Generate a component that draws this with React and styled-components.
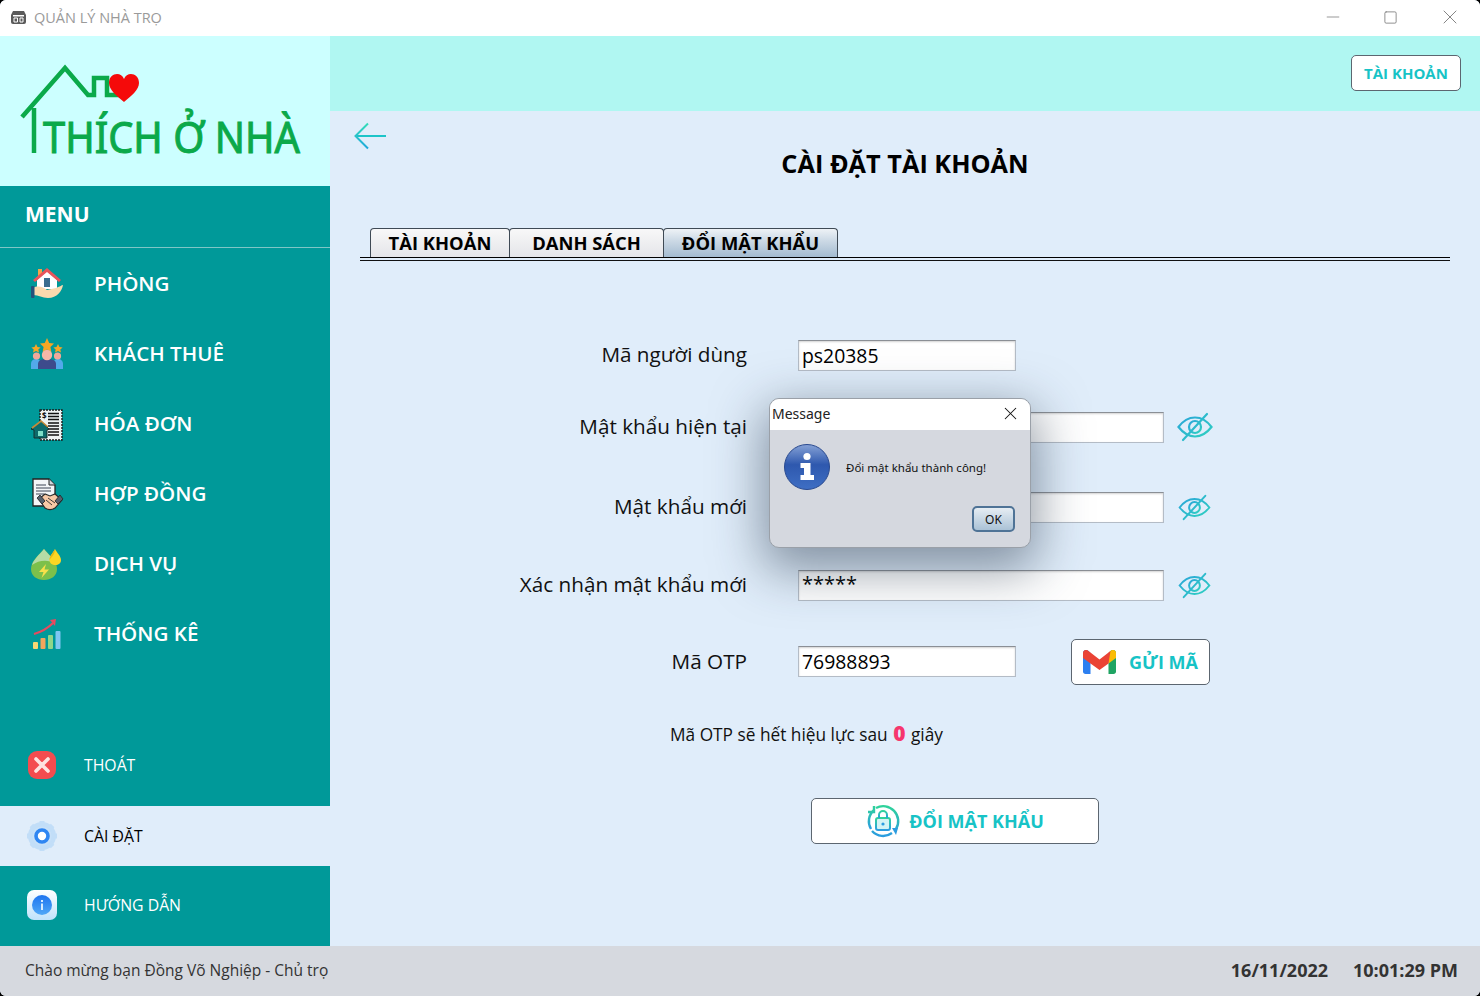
import React from "react";
import styled, { createGlobalStyle } from "styled-components";
import { Minus, Square, X } from "lucide-react";

const GlobalStyle = createGlobalStyle`
  html, body {
    margin: 0;
    padding: 0;
    background: #000;
  }
  * {
    box-sizing: border-box;
  }
`;

const Window = styled.div`
  width: 1480px;
  height: 996px;
  position: relative;
  display: flex;
  flex-direction: column;
  overflow: hidden;
  border-radius: 6px;
  background: #e0edfa;
  font-family: "Open Sans", "Noto Sans", sans-serif;
`;

const TitleBar = styled.div`
  height: 36px;
  flex: none;
  display: flex;
  align-items: center;
  padding: 0 0 2px 11px;
  background: #fff;
  color: #9a9a9a;
  font-size: 14.5px;
  gap: 8px;
`;

const TitleText = styled.span`
  flex: 1;
`;

const WinButtons = styled.div`
  display: flex;
  align-items: center;
  padding-right: 18px;
  gap: 40px;
  color: #777;
`;

const Body = styled.div`
  flex: 1;
  display: flex;
  min-height: 0;
`;

const Sidebar = styled.aside`
  width: 330px;
  flex: none;
  display: flex;
  flex-direction: column;
  background: #009999;
`;

const LogoBox = styled.div`
  height: 150px;
  flex: none;
  background: #ccffff;
  display: flex;
`;

const MenuHead = styled.div`
  height: 62px;
  flex: none;
  display: flex;
  align-items: center;
  padding: 0 0 6px 25px;
  color: #fff;
  font-size: 21px;
  font-weight: 700;
  border-bottom: 1px solid #7fc6c6;
`;

const NavList = styled.nav`
  margin-top: 1px;
  display: flex;
  flex-direction: column;
  flex: 1;
`;

const NavItem = styled.div`
  height: 70px;
  display: flex;
  align-items: center;
  padding-left: 30px;
  color: #fff;
  font-size: 20.6px;
  font-weight: 600;

  svg {
    width: 34px;
    height: 34px;
    flex: none;
    margin-right: 30px;
  }

  span {
    padding-bottom: 2px;
  }
`;

const BottomItem = styled.div`
  height: 60px;
  flex: none;
  display: flex;
  align-items: center;
  padding-left: 26px;
  font-size: 15.8px;
  margin-bottom: ${(p) => p.$after || 0}px;
  margin-top: ${(p) => p.$before || 0}px;
  color: ${(p) => (p.$active ? "#000" : "#fff")};
  background: ${(p) => (p.$active ? "#e0edfa" : "transparent")};

  svg {
    width: 32px;
    height: 32px;
    flex: none;
    margin-right: 26px;
  }
`;

const Main = styled.main`
  flex: 1;
  display: flex;
  flex-direction: column;
  min-width: 0;
`;

const TopBar = styled.div`
  height: 75px;
  flex: none;
  background: #b0f7f2;
  display: flex;
  align-items: center;
  justify-content: flex-end;
  padding: 0 19px 2px 0;
`;

const WhiteButton = styled.button`
  display: flex;
  align-items: center;
  justify-content: center;
  gap: ${(p) => p.$gap || 0}px;
  width: ${(p) => p.$w}px;
  height: ${(p) => p.$h}px;
  margin-top: ${(p) => p.$top || 0}px;
  padding: 0;
  background: #fff;
  border: 1px solid #5c6670;
  border-radius: 5px;
  color: #17c3c6;
  font-family: "Open Sans", "Noto Sans", sans-serif;
  font-weight: 700;
  font-size: ${(p) => p.$size || 18}px;
`;

const Content = styled.div`
  flex: 1;
  display: flex;
  flex-direction: column;
  padding: 11px 30px 0;
`;

const BackRow = styled.div`
  height: 18px;
  margin-left: -7px;

  svg {
    display: block;
  }
`;

const Heading = styled.h1`
  margin: 0;
  height: 42px;
  padding: 3px 0 0;
  text-align: center;
  color: #000;
  font-size: 25.3px;
  line-height: 40px;
  font-weight: 700;
`;

const TabStrip = styled.div`
  margin-top: 46px;
  display: flex;
  padding-left: 10px;
  border-bottom: 1px solid #000;
  position: relative;
  height: 30px;

  &::after {
    content: "";
    position: absolute;
    left: 0;
    right: 0;
    bottom: -4px;
    height: 1px;
    background: #111;
  }
`;

const Tab = styled.div`
  width: ${(p) => p.$w}px;
  height: 29px;
  display: flex;
  align-items: center;
  justify-content: center;
  border: 1px solid #3f4a55;
  border-bottom: none;
  border-radius: 4px 4px 0 0;
  margin-right: -1px;
  padding-bottom: 2px;
  color: #000;
  font-size: 18.4px;
  font-weight: 700;
  background: ${(p) =>
    p.$active
      ? "linear-gradient(#eef2f6, #cddae6 40%, #a3bbd0)"
      : "linear-gradient(#f8f8f8, #e4e5e9)"};
`;

const Form = styled.div`
  display: flex;
  flex-direction: column;
  margin-top: 74px;
  margin-left: -30px;
`;

const Row = styled.div`
  display: grid;
  grid-template-columns: 417px auto auto;
  column-gap: 51px;
  align-items: center;
  justify-content: start;
  height: 46px;
  margin-top: ${(p) => p.$gap || 0}px;
  position: relative;
`;

const Label = styled.label`
  padding-bottom: 2px;
  text-align: right;
  color: #111;
  font-size: 20.7px;
`;

const Field = styled.div`
  display: flex;
  align-items: center;
  gap: ${(p) => p.$gap || 0}px;
`;

const Input = styled.div`
  width: ${(p) => p.$w}px;
  height: 31px;
  padding: ${(p) => (p.$mask ? "0 3px 4px" : "0 3px")};
  display: flex;
  align-items: center;
  color: #000;
  font-size: ${(p) => (p.$mask ? 20 : 19.4)}px;
  background: #fff;
  border: 1px solid #b4bcc6;
  border-top-color: #8b8f95;
  box-shadow: inset 0 1px 2px rgba(0, 0, 0, 0.18);
`;

const Note = styled.div`
  margin-top: 36px;
  margin-left: 340px;
  color: #111;
  font-size: 17.3px;
  height: 26px;
  line-height: 26px;
`;

const Count = styled.b`
  color: #f6366d;
  font-size: 21px;
  font-weight: 800;
  margin: 0 1px;
`;

const ActionRow = styled.div`
  margin-top: 52px;
  margin-left: 481px;
`;

const StatusBar = styled.footer`
  height: 50px;
  flex: none;
  display: flex;
  align-items: center;
  justify-content: space-between;
  padding: 0 22px 2px 25px;
  background: #d6d9df;
  color: #333;
  font-size: 15.5px;
`;

const Clock = styled.div`
  display: flex;
  gap: 25px;
  color: #333;
  font-size: 18px;
  font-weight: 700;
`;

const Dialog = styled.div`
  position: absolute;
  left: 769px;
  top: 398px;
  width: 262px;
  height: 150px;
  border-radius: 10px;
  background: #d5d8df;
  border: 1px solid #9aa0a8;
  box-shadow: 0 16px 50px 6px rgba(40, 55, 75, 0.5);
  overflow: hidden;
  font-family: "Noto Sans", "Open Sans", sans-serif;
`;

const DialogTitle = styled.div`
  height: 31px;
  background: #fff;
  display: flex;
  align-items: center;
  justify-content: space-between;
  padding: 0 9px 3px 2px;
  color: #222;
  font-size: 14px;
`;

const DialogBody = styled.div`
  display: flex;
  align-items: center;
  padding: 14px 0 0 14px;
  gap: 16px;
  color: #111;
  font-size: 11.5px;
`;

const DialogFoot = styled.div`
  display: flex;
  justify-content: flex-end;
  padding: 16px 15px 0 0;
`;

const OkButton = styled.div`
  width: 43px;
  height: 26px;
  display: flex;
  align-items: center;
  justify-content: center;
  border: 2px solid #4f7396;
  border-radius: 5px;
  color: #111;
  font-size: 12px;
  background: linear-gradient(#e6edf3, #aac2d6);
`;

const BackArrow = () => (
  <svg width="34" height="30" viewBox="0 0 34 30" fill="none">
    <defs>
      <linearGradient id="backGrad" x1="0" y1="0" x2="0" y2="1">
        <stop offset="0" stopColor="#35dcb8" />
        <stop offset="1" stopColor="#1ea8dc" />
      </linearGradient>
    </defs>
    <path d="M33 14 H2.5" stroke="#1cc4c8" strokeWidth="2" />
    <path d="M15 1.5 L2.5 14 L15 26.5" stroke="url(#backGrad)" strokeWidth="2" />
  </svg>
);

const RoomIcon = () => (
  <svg viewBox="0 0 34 34">
    <rect x="8" y="2" width="4" height="7" fill="#f2a54a" />
    <path d="M7 13 L17 4 L27 13 V22 H7Z" fill="#fff" />
    <path d="M3 13 L17 1 L31 13 L29 15 L17 5 L5 15Z" fill="#e9545a" />
    <rect x="14" y="11" width="6" height="9" fill="#3b6d8f" />
    <path d="M3 21 C8 18 13 20 17 23 L26 21 C29 20 32 18 33 18 C32 24 27 31 18 31 C12 31 9 28 3 28Z" fill="#fbd9ae" />
    <rect x="1" y="19" width="3.5" height="12" rx="1" fill="#27507a" />
  </svg>
);

const GuestIcon = () => (
  <svg viewBox="0 0 34 34">
    <path d="M17 1 L19.2 6 L24 6.6 L20.4 10 L21.4 15 L17 12.5 L12.6 15 L13.6 10 L10 6.6 L14.8 6Z" fill="#f6a623" />
    <path d="M6 7 L7.5 10 L10.6 10.4 L8.3 12.6 L9 15.6 L6 14 L3 15.6 L3.7 12.6 L1.4 10.4 L4.5 10Z" fill="#f6a623" />
    <path d="M28 7 L29.5 10 L32.6 10.4 L30.3 12.6 L31 15.6 L28 14 L25 15.6 L25.7 12.6 L23.4 10.4 L26.5 10Z" fill="#f6a623" />
    <path d="M1 32 V27 C1 23 4 22 6 22 C9 22 11 24 11 27 V32Z" fill="#52a9ea" />
    <path d="M23 32 V27 C23 24 25 22 28 22 C31 22 33 24 33 27 V32Z" fill="#52a9ea" />
    <circle cx="6.5" cy="19" r="3.6" fill="#f1a899" />
    <circle cx="27.5" cy="19" r="3.6" fill="#f1a899" />
    <path d="M8 32 V27 C8 23 12 22 17 22 C22 22 26 23 26 27 V32Z" fill="#3d4b8c" />
    <circle cx="17" cy="18" r="5.2" fill="#f6b7a8" />
  </svg>
);

const InvoiceIcon = () => (
  <svg viewBox="0 0 34 34">
    <path d="M10 3 H32 V33 H10Z" fill="#eef2f2" stroke="#1a1a1a" strokeWidth="1.4" strokeDasharray="2 1" />
    <text x="12" y="12" fontSize="8" fontWeight="700" fill="#111" fontFamily="Open Sans, sans-serif">$</text>
    <path d="M18 6.5 H29 M18 9.5 H29 M18 12.5 H29 M18 16 H29 M18 19 H29 M18 22 H29 M18 25 H29 M18 28 H29" stroke="#111" strokeWidth="1.5" />
    <path d="M1 22 L11 14 L19 22 L17 23 V31 H4 V23Z" fill="#0d6b6b" stroke="#14302f" strokeWidth="1" />
    <path d="M2 21 L11 14 L18 20" fill="none" stroke="#c58b3a" strokeWidth="1.6" />
    <rect x="8" y="24" width="5" height="5" fill="#7fe0c8" />
  </svg>
);

const ContractIcon = () => (
  <svg viewBox="0 0 34 34">
    <path d="M3 2 H19 L25 8 V29 H3Z" fill="#f4f6f8" stroke="#222" strokeWidth="1.3" />
    <path d="M19 2 V8 H25" fill="#cfd6dc" stroke="#222" strokeWidth="1" />
    <path d="M6 8 H16 M6 11 H21 M6 14 H21 M6 17 H14" stroke="#7a808a" strokeWidth="1.3" />
    <path d="M9 22 L15 17 L20 19 L25 17 L32 23 L25 31 C22 33 18 33 15 31Z" fill="#f8c9a6" stroke="#2a2a2a" strokeWidth="1.1" />
    <path d="M7 21 L10 18 L15 24 L12 27Z M33 22 L30 18 L25 24 L28 27Z" fill="#56606c" stroke="#222" strokeWidth="0.8" />
    <path d="M16 23 L22 28 M18 21 L25 26" stroke="#2a2a2a" strokeWidth="0.9" />
  </svg>
);

const ServiceIcon = () => (
  <svg viewBox="0 0 34 34">
    <path d="M14 2 C20 9 27 14 27 22 C27 29 21 33 14 33 C7 33 1 29 1 22 C1 14 8 9 14 2Z" fill="#7cc04b" />
    <path d="M14 2 C9 8 4 12 2 18 C9 13 18 12 26 17 C24 12 18 7 14 2Z" fill="#b6dca6" />
    <path d="M16 17 L9 25 H13.5 L11.5 31 L19 22.5 H14.5Z" fill="#f8e04a" />
    <path d="M25 2 C27 6 31 9 31 13 C31 16.5 28.5 18 25.5 18 C22 18 19.5 16 19.5 13 C19.5 9 23 6 25 2Z" fill="#fbd624" />
    <path d="M25 2 C23 6 19.5 9 19.5 13 C21 10 25 8.5 25 2Z" fill="#e6b915" />
  </svg>
);

const ChartIcon = () => (
  <svg viewBox="0 0 34 34">
    <rect x="3" y="25" width="5" height="7" rx="1" fill="#f7d774" />
    <rect x="10.5" y="21" width="5" height="11" rx="1" fill="#f3a55c" />
    <rect x="18" y="18" width="5" height="14" rx="1" fill="#8fd68a" />
    <rect x="25.5" y="14" width="5" height="18" rx="1" fill="#7fc6f2" />
    <path d="M4 17 C11 15 18 11 23 6" fill="none" stroke="#e84a5f" strokeWidth="2.2" />
    <path d="M20 3 L26 2 L25 9Z" fill="#e84a5f" />
  </svg>
);

const ExitIcon = () => (
  <svg viewBox="0 0 32 32">
    <rect x="2" y="2" width="28" height="28" rx="9" fill="#f34c4f" />
    <path d="M10 10 L22 22 M22 10 L10 22" stroke="#fde3e0" strokeWidth="3.6" strokeLinecap="round" />
  </svg>
);

const GearIcon = () => (
  <svg viewBox="0 0 32 32">
    <circle cx="16" cy="16" r="11.5" fill="none" stroke="#c2def8" strokeWidth="5" />
    <path d="M16 1 V31 M1 16 H31 M5.4 5.4 L26.6 26.6 M26.6 5.4 L5.4 26.6" stroke="#c2def8" strokeWidth="5" strokeDasharray="5 20 5" />
    <circle cx="16" cy="16" r="9.5" fill="#c8e1f8" />
    <circle cx="16" cy="16" r="6" fill="#fff" stroke="#2f86f2" strokeWidth="3.6" />
  </svg>
);

const HelpIcon = () => (
  <svg viewBox="0 0 32 32">
    <defs>
      <linearGradient id="helpBg" x1="0" y1="0" x2="0" y2="1">
        <stop offset="0" stopColor="#ffffff" />
        <stop offset="1" stopColor="#bfe2fb" />
      </linearGradient>
      <linearGradient id="helpDot" x1="0" y1="0" x2="0" y2="1">
        <stop offset="0" stopColor="#1f74ef" />
        <stop offset="1" stopColor="#4fa8f7" />
      </linearGradient>
    </defs>
    <rect x="1" y="1" width="30" height="30" rx="7" fill="url(#helpBg)" />
    <circle cx="16" cy="16" r="10" fill="url(#helpDot)" />
    <rect x="15" y="14.5" width="2" height="6.5" fill="#d7ecff" />
    <rect x="15" y="11" width="2" height="2" fill="#d7ecff" />
  </svg>
);

const EyeOff = ({ small }) => (
  <svg width={small ? 33 : 36} height={small ? 27 : 30} viewBox="0 0 36 30" fill="none">
    <defs>
      <linearGradient id="eyeGrad" x1="0" y1="0" x2="1" y2="1">
        <stop offset="0" stopColor="#2aa6d8" />
        <stop offset="1" stopColor="#2fd0c0" />
      </linearGradient>
    </defs>
    <path d="M1.5 15 C7 7.5 12 5.5 18 5.5 C24 5.5 29 7.5 34.5 15 C29 22 24 24.5 18 24.5 C12 24.5 7 22 1.5 15Z" stroke="url(#eyeGrad)" strokeWidth="2.2" />
    <circle cx="18" cy="15" r="6" stroke="url(#eyeGrad)" strokeWidth="2.2" />
    <path d="M30 2 L6 28" stroke="url(#eyeGrad)" strokeWidth="2.2" strokeLinecap="round" />
  </svg>
);

const GmailIcon = () => (
  <svg width="33" height="24" viewBox="0 0 33 24">
    <path d="M0 3 C0 0 3.5 -1 5.5 1 L7.5 3 V24 H2.5 C1 24 0 23 0 21.5Z" fill="#2d7ff0" />
    <path d="M25.5 3 L27.5 1 C29.5 -1 33 0 33 3 V21.5 C33 23 32 24 30.5 24 H25.5Z" fill="#1fa463" />
    <path d="M25.5 3 L27.5 1 C29.5 -1 33 0 33 3 V8 L25.5 13.5Z" fill="#fbbc04" />
    <path d="M0 3 C0 0 3.5 -1 5.5 1 L16.5 9.5 L27.5 1 L25.5 13.5 L16.5 20 L7.5 13.5 L0 8Z" fill="#ea4335" />
  </svg>
);

const LockIcon = () => (
  <svg width="34" height="34" viewBox="0 0 34 34" fill="none">
    <defs>
      <linearGradient id="lockGrad" x1="0" y1="0" x2="0" y2="1">
        <stop offset="0" stopColor="#2fd39a" />
        <stop offset="1" stopColor="#2a9ce0" />
      </linearGradient>
    </defs>
    <path d="M5 25 A15 15 0 0 1 8 6 M8 2 V8 H2" stroke="url(#lockGrad)" strokeWidth="2.4" />
    <path d="M10 4 A15 15 0 0 1 30 25 M26 29 A15 15 0 0 1 6 27" stroke="url(#lockGrad)" strokeWidth="2.4" />
    <path d="M26 24 L32 24 L30 31Z" fill="#2a9ce0" />
    <rect x="10" y="14" width="14" height="12" rx="2" stroke="url(#lockGrad)" strokeWidth="2" fill="#d3f3f5" />
    <path d="M13 14 V11 A4 4 0 0 1 21 11 V14" stroke="url(#lockGrad)" strokeWidth="2" />
    <circle cx="17" cy="20" r="1.6" fill="#2a9ce0" />
  </svg>
);

const DialogInfo = () => (
  <svg width="46" height="46" viewBox="0 0 46 46">
    <defs>
      <linearGradient id="infoGrad" x1="0" y1="0" x2="0" y2="1">
        <stop offset="0" stopColor="#86a2d6" />
        <stop offset="0.45" stopColor="#2e58ae" />
        <stop offset="1" stopColor="#3f6fc4" />
      </linearGradient>
    </defs>
    <circle cx="23" cy="23" r="22.5" fill="url(#infoGrad)" stroke="#2a4a8f" />
    <circle cx="23" cy="12.5" r="3.6" fill="#fff" />
    <path d="M16.5 19 H26.5 V31 H30 V36 H16.5 V31 H20 V24 H16.5Z" fill="#fff" />
  </svg>
);

const AppIcon = () => (
  <svg width="15" height="15" viewBox="0 0 15 15">
    <path d="M2 1 H13 L15 5 V12 Q15 14 13 14 H2 Q0 14 0 12 V5Z" fill="#5b5b5b" />
    <rect x="2" y="5" width="11" height="1.5" fill="#fff" />
    <path d="M3 8 H6.5 V12 H3Z M9 8 H12 V12 H9Z" fill="none" stroke="#fff" />
  </svg>
);

const LogoArt = () => (
  <svg width="330" height="150" viewBox="0 0 330 150">
    <path d="M34 117 V72 M22 81 L65 32 L88 59 H94 V42 H107 V59 H122" fill="none" stroke="#0ba94a" strokeWidth="4.5" />
    <path d="M124 66 C117 60 109 54 109 47 C109 37 121 35 124 43 C127 35 139 37 139 47 C139 54 131 60 124 66Z" fill="#f50a0a" />
    <text
      x="43"
      y="117"
      fill="#0ba94a"
      stroke="#0ba94a"
      strokeWidth="1"
      fontSize="43"
      textLength="257"
      lengthAdjust="spacingAndGlyphs"
      fontFamily="Noto Sans, Open Sans, sans-serif"
    >
      THÍCH Ở NHÀ
    </text>
  </svg>
);

const navItems = [
  { name: "PHÒNG", icon: <RoomIcon /> },
  { name: "KHÁCH THUÊ", icon: <GuestIcon /> },
  { name: "HÓA ĐƠN", icon: <InvoiceIcon /> },
  { name: "HỢP ĐỒNG", icon: <ContractIcon /> },
  { name: "DỊCH VỤ", icon: <ServiceIcon /> },
  { name: "THỐNG KÊ", icon: <ChartIcon /> },
];

const App = () => {
  return (
    <Window>
      <GlobalStyle />
      <TitleBar>
        <AppIcon />
        <TitleText>QUẢN LÝ NHÀ TRỌ</TitleText>
        <WinButtons>
          <Minus size={20} strokeWidth={0.9} />
          <Square size={15} strokeWidth={1.3} />
          <X size={24} strokeWidth={0.9} />
        </WinButtons>
      </TitleBar>
      <Body>
        <Sidebar>
          <LogoBox>
            <LogoArt />
          </LogoBox>
          <MenuHead>MENU</MenuHead>
          <NavList>
            {navItems.map((item) => (
              <NavItem key={item.name}>
                {item.icon}
                <span>{item.name}</span>
              </NavItem>
            ))}
          </NavList>
          <BottomItem $after={11}>
            <ExitIcon />
            THOÁT
          </BottomItem>
          <BottomItem $active>
            <GearIcon />
            CÀI ĐẶT
          </BottomItem>
          <BottomItem $before={9} $after={11}>
            <HelpIcon />
            HƯỚNG DẪN
          </BottomItem>
        </Sidebar>
        <Main>
          <TopBar>
            <WhiteButton $w={110} $h={36} $size={15}>
              TÀI KHOẢN
            </WhiteButton>
          </TopBar>
          <Content>
            <BackRow>
              <BackArrow />
            </BackRow>
            <Heading>CÀI ĐẶT TÀI KHOẢN</Heading>
            <TabStrip>
              <Tab $w={140}>TÀI KHOẢN</Tab>
              <Tab $w={155}>DANH SÁCH</Tab>
              <Tab $w={175} $active>
                ĐỔI MẬT KHẨU
              </Tab>
            </TabStrip>
            <Form>
              <Row>
                <Label>Mã người dùng</Label>
                <Input $w={218}>ps20385</Input>
              </Row>
              <Row $gap={26}>
                <Label>Mật khẩu hiện tại</Label>
                <Field $gap={13}>
                  <Input $w={366} />
                  <EyeOff />
                </Field>
              </Row>
              <Row $gap={34}>
                <Label>Mật khẩu mới</Label>
                <Field $gap={14}>
                  <Input $w={366} />
                  <EyeOff small />
                </Field>
              </Row>
              <Row $gap={32}>
                <Label>Xác nhận mật khẩu mới</Label>
                <Field $gap={14}>
                  <Input $w={366} $mask>
                    *****
                  </Input>
                  <EyeOff small />
                </Field>
              </Row>
              <Row $gap={30}>
                <Label>Mã OTP</Label>
                <Field $gap={55}>
                  <Input $w={218}>76988893</Input>
                  <WhiteButton $w={139} $h={46} $gap={13} $top={1}>
                    <GmailIcon />
                    GỬI MÃ
                  </WhiteButton>
                </Field>
              </Row>
              <Note>
                Mã OTP sẽ hết hiệu lực sau <Count>0</Count> giây
              </Note>
              <ActionRow>
                <WhiteButton $w={288} $h={46} $gap={9}>
                  <LockIcon />
                  ĐỔI MẬT KHẨU
                </WhiteButton>
              </ActionRow>
            </Form>
          </Content>
        </Main>
      </Body>
      <StatusBar>
        <span>Chào mừng bạn Đồng Võ Nghiệp - Chủ trọ</span>
        <Clock>
          <span>16/11/2022</span>
          <span>10:01:29 PM</span>
        </Clock>
      </StatusBar>
      <Dialog>
        <DialogTitle>
          Message
          <X size={21} strokeWidth={1.2} color="#111" />
        </DialogTitle>
        <DialogBody>
          <DialogInfo />
          Đổi mật khẩu thành công!
        </DialogBody>
        <DialogFoot>
          <OkButton>OK</OkButton>
        </DialogFoot>
      </Dialog>
    </Window>
  );
};

export default App;
